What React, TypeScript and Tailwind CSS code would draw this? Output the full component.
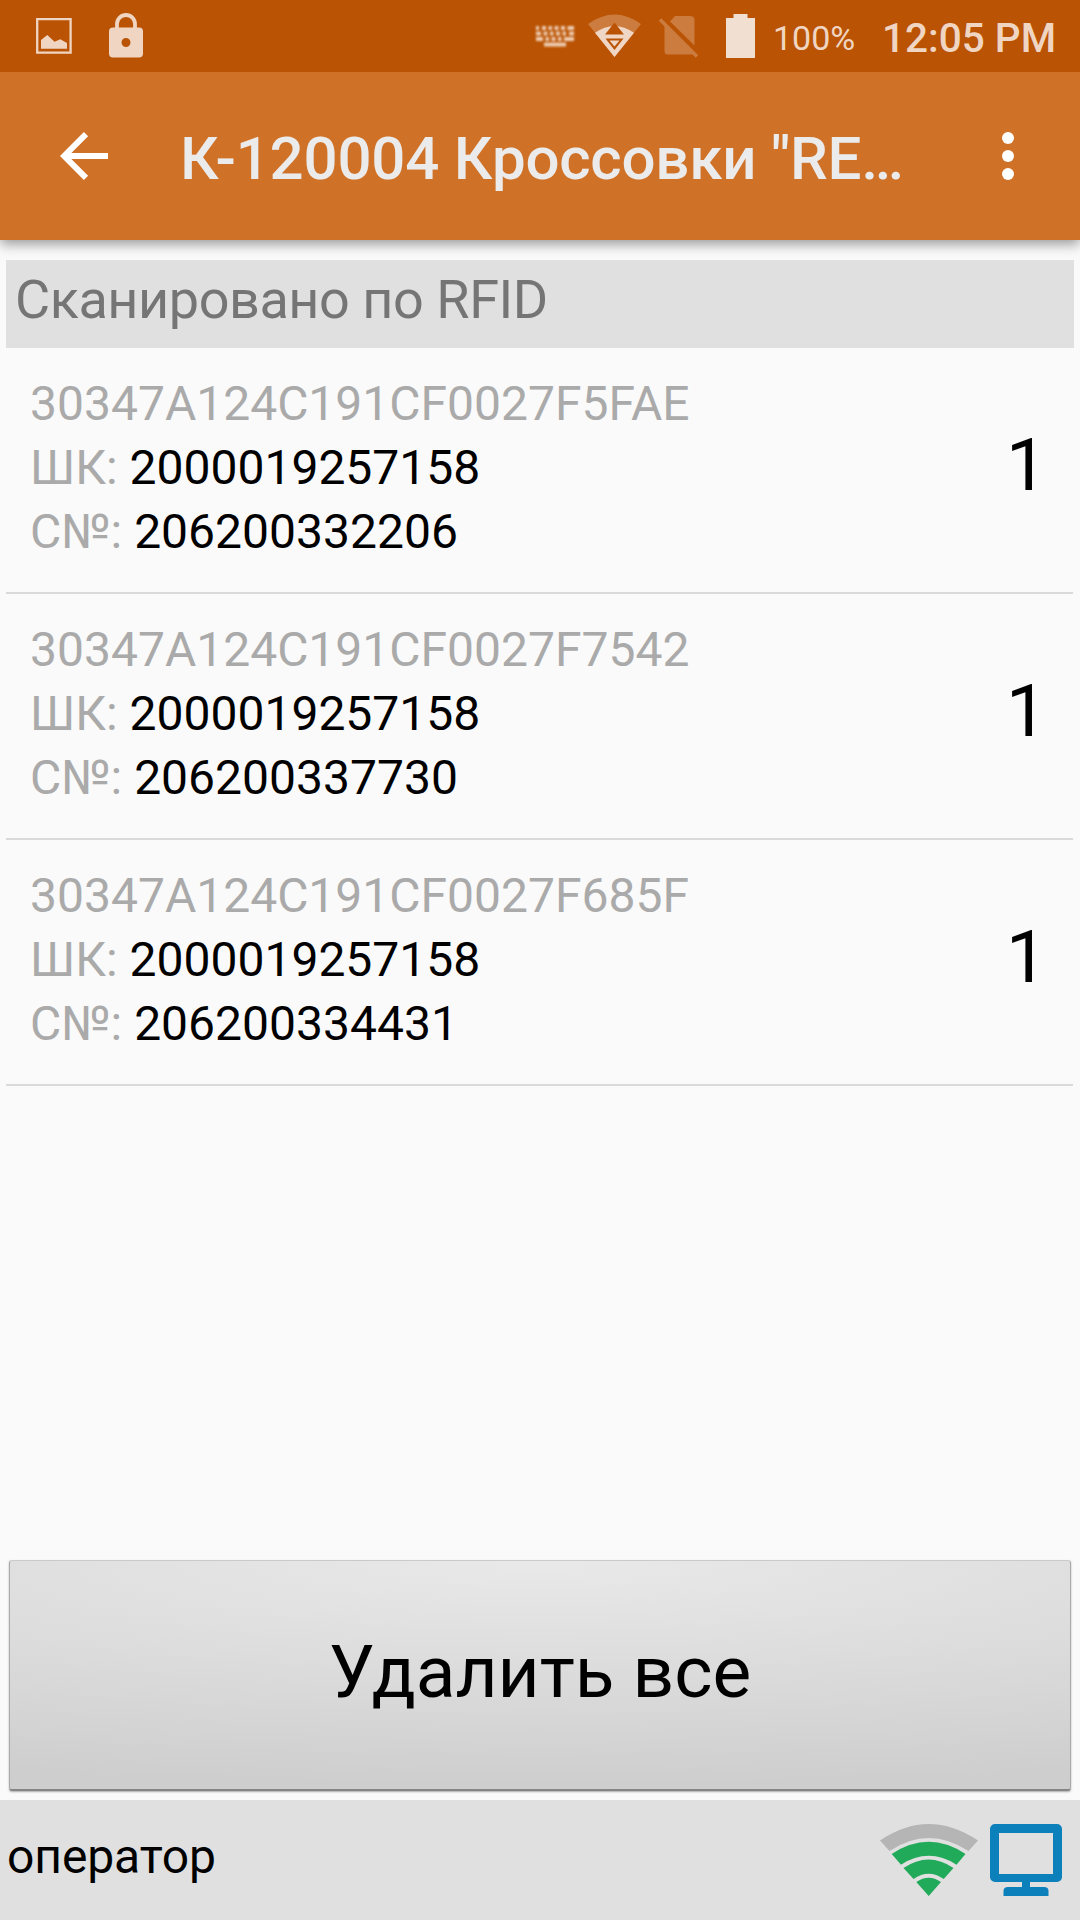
const rows = [
  ['30347A124C191CF0027F5FAE', '206200332206'],
  ['30347A124C191CF0027F7542', '206200337730'],
  ['30347A124C191CF0027F685F', '206200334431'],
];

function PictureIcon() {
  return (
    <svg className="ml-[36px] shrink-0" width="36" height="36" viewBox="0 0 36 36">
      <path d="M1.2 1.2H34.6V34.6H1.2Z" fill="none" stroke="#efd5c2" strokeWidth="2.3" />
      <path d="M5 22L11.3 17L18.5 23.8L24.3 21.2L31 25V30.7H5Z" fill="#efd5c2" />
    </svg>
  );
}

function LockIcon() {
  return (
    <svg className="mb-[2px] ml-[37px] shrink-0" width="34" height="46" viewBox="0 0 34 46">
      <path d="M8 18V12A9 9 0 0 1 26 12V18" fill="none" stroke="#efd5c2" strokeWidth="3.8" />
      <path fillRule="evenodd" d="M4 15.500H30A4 4 0 0 1 34 19.500V41.500A4 4 0 0 1 30 45.500H4A4 4 0 0 1 0 41.500V19.500A4 4 0 0 1 4 15.500ZM17 26A4.500 4.500 0 1 0 17 35A4.500 4.500 0 1 0 17 26Z" fill="#efd5c2" />
    </svg>
  );
}

function KeyboardIcon() {
  return (
    <svg className="ml-[392px] shrink-0 blur-[0.8px]" width="40" height="24" viewBox="0 0 40 24" fill="#efcdb4">
      <path d="M1 2h3v4H1zM7 2h4v4H7zM13.5 2h3.5v4h-3.5zM19.5 2h4v4h-4zM26 2h4v4h-4zM32.5 2H39v4h-6.5zM1 7.500h5v4H1zM8.500 7.500h4v4h-4zM15 7.500h3.500v4H15zM21 7.500h4v4h-4zM27.500 7.500h3.500v4h-3.500zM34 7.500h5v4h-5zM1 13h7v4H1zM10.500 13h3.500v4h-3.500zM16.500 13h4v4h-4zM23 13h3.500v4H23zM29 13h10v4H29zM9 18.500h22v4H9z" />
    </svg>
  );
}

function StatusWifiIcon() {
  return (
    <svg className="ml-[13px] shrink-0" width="53" height="44" viewBox="0 0 53 44">
      <path d="M0 10Q26.500 -9 53 10L26.500 43Z" fill="#cc7c3e" />
      <path d="M7 18.800Q26.500 5 46 18.800L26.500 43Z" fill="#f0d7c5" />
      <path d="M26.500 8.500L36 20.500H17ZM17.500 24.500H35.500L26.500 36Z" fill="#ba5303" />
      <path d="M21.500 26.500H31.500L26.500 32.500Z" fill="#f0d7c5" />
    </svg>
  );
}

function NoSimIcon() {
  return (
    <svg className="ml-[18px] shrink-0" width="40" height="44" viewBox="0 0 40 44">
      <path d="M11 7.500L16 2H31Q35.500 2 35.500 6V31.500ZM5.500 10L35 39.500Q34 40.500 32.500 40.500H9Q5.500 40.500 5.500 37Z" fill="#cc7c3e" />
      <path d="M1 5.500L38 42.500" stroke="#cc7c3e" strokeWidth="3.500" />
    </svg>
  );
}

function NetworkIcon() {
  return (
    <svg className="shrink-0" width="98" height="72" viewBox="0 0 98 72">
      <path d="M0 16.500Q48.700 -16.500 98 16.500L88.500 27Q48.700 1 9.500 27Z" fill="#b5b5b5" />
      <path d="M11.700 30Q48.700 5.700 85.500 30L76.500 40.700Q48.700 23 21 40.700ZM23.500 44Q48.700 27 73.500 44L63.700 55Q48.700 44.500 33.500 55ZM36.300 58Q48.700 49.500 61 58L48.700 72Z" fill="#22aa5b" />
    </svg>
  );
}

function MonitorIcon() {
  return (
    <svg className="ml-[12px] shrink-0" width="72" height="72" viewBox="0 0 72 72">
      <path fillRule="evenodd" d="M5 0H67A5 5 0 0 1 72 5V53A5 5 0 0 1 67 58H40V63H54Q58.500 63 58.500 67V72H13.500V67Q13.500 63 18 63H32V58H5A5 5 0 0 1 0 53V5A5 5 0 0 1 5 0ZM9 9V50H63V9Z" fill="#0c80bb" />
    </svg>
  );
}

export default function App() {
  return (
    <div className="flex h-[1920px] w-[1080px] flex-col overflow-hidden bg-[#fafafa] font-[Roboto,sans-serif] text-black">
      <div className="relative z-20 flex h-[72px] shrink-0 items-center whitespace-nowrap bg-[#ba5303] text-[#efd5c2]">
        <PictureIcon />
        <LockIcon />
        <KeyboardIcon />
        <StatusWifiIcon />
        <NoSimIcon />
        <svg className="ml-[27px] shrink-0" width="29" height="44" viewBox="0 0 29 44">
          <path d="M7.500 0H21.500V4H29V44H0V4H7.500Z" fill="#f1dfd1" />
        </svg>
        <span className="ml-[18px] mt-[3px] w-[81px] text-[34px] leading-none">100%</span>
        <span className="ml-[28px] mt-[5px] text-[40.500px] font-medium leading-none">12:05 PM</span>
      </div>
      <div className="z-10 flex h-[168px] shrink-0 items-center whitespace-nowrap bg-[#cf7127] shadow-[0_4px_12px_rgba(0,0,0,0.4)]">
        <svg className="ml-[60px] shrink-0" width="48" height="48" viewBox="0 0 48 48" fill="none" stroke="#fff" strokeWidth="6">
          <path d="M26 2.100L4.200 24L26 45.900M4 24H48" />
        </svg>
        <span className="ml-[72px] mt-[6px] w-[740px] text-[60px] font-medium leading-none tracking-[-0.2px] text-[#ebebeb]">К-120004 Кроссовки "RE…</span>
        <svg className="ml-[82px] shrink-0" width="12" height="48" viewBox="0 0 12 48" fill="#fff">
          <circle cx="6" cy="6" r="6" />
          <circle cx="6" cy="24" r="6" />
          <circle cx="6" cy="42" r="6" />
        </svg>
      </div>
      <div className="mx-[6px] mt-[20px] h-[88px] shrink-0 bg-[#e0e0e0] pl-[9px] text-[54px] leading-[80px] tracking-[-0.45px] text-[#757575]">Сканировано по RFID</div>
      {rows.map(([id, sn]) => (
        <div key={id} className="ml-[6px] mr-[7px] flex h-[246px] shrink-0 items-center border-b-2 border-[#dadada] pb-[5px] pl-[24px] pr-[26px]">
          <div className="flex-1 text-[48px] leading-[64px] text-[#aaa]">
            <div>{id}</div>
            <div>ШК: <span className="text-black">2000019257158</span></div>
            <div>С№: <span className="text-black">{sn}</span></div>
          </div>
          <span className="pb-[4px] text-[73px] leading-none">1</span>
        </div>
      ))}
      <div className="flex-1" />
      <button className="mx-[9px] mb-[9px] h-[231px] rounded-[3px] border border-x-[#aaa] border-b-2 border-b-[#858585] border-t-[#c9cbc9] bg-[radial-gradient(ellipse_1500px_225px_at_50%_0,#e9e9e9,#cecece)] pb-[5px] text-[73px] shadow-[0_1px_2px_#aaa]">Удалить все</button>
      <div className="flex h-[120px] shrink-0 items-center bg-[#e0e0e0] pl-[7px] pr-[18px] text-[48px]">
        <span className="flex-1 pb-[7px] tracking-[-0.1px]">оператор</span>
        <NetworkIcon />
        <MonitorIcon />
      </div>
    </div>
  );
}
